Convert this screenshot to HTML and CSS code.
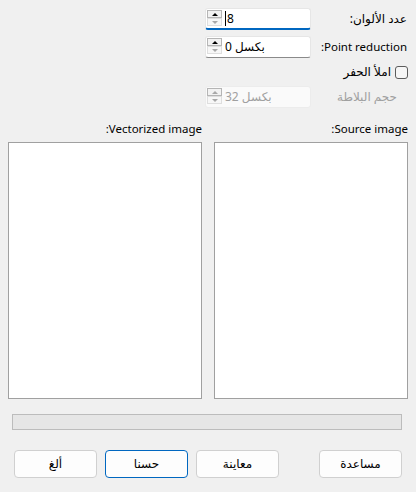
FILE: index.html
```html
<!DOCTYPE html>
<html lang="ar" dir="rtl">
<head>
<meta charset="utf-8">
<link rel="stylesheet" href="styles.css">
</head>
<body>
<div class="dialog">
  <div class="options">
    <div class="row">
      <span class="lbl">عدد الألوان:</span>
      <div class="field focus">
        <div class="spin"><div class="sb up"><i class="tri-up"></i></div><div class="sb down"><i class="tri-down dim"></i></div></div>
        <span class="val"><span class="caret"></span>8</span>
      </div>
    </div>
    <div class="row">
      <span class="lbl en">Point reduction:</span>
      <div class="field">
        <div class="spin"><div class="sb up"><i class="tri-up"></i></div><div class="sb down"><i class="tri-down dim"></i></div></div>
        <span class="val">0 بكسل</span>
      </div>
    </div>
    <div class="row chk-row">
      <span class="chk"></span>
      <span>املأ الحفر</span>
    </div>
    <div class="row">
      <span class="lbl disabled-lbl">حجم البلاطة</span>
      <div class="field disabled">
        <div class="spin"><div class="sb up"><i class="tri-up dim"></i></div><div class="sb down"><i class="tri-down dim"></i></div></div>
        <span class="val">32 بكسل</span>
      </div>
    </div>
  </div>

  <div class="panes">
    <div class="pane">
      <div class="pane-label en">Source image:</div>
      <div class="canvas"></div>
    </div>
    <div class="pane">
      <div class="pane-label en">Vectorized image:</div>
      <div class="canvas"></div>
    </div>
  </div>

  <div class="progress"></div>

  <div class="buttons">
    <button class="btn">مساعدة</button>
    <div class="btn-group">
      <button class="btn">معاينة</button>
      <button class="btn default">حسنا</button>
      <button class="btn">ألغ</button>
    </div>
  </div>
</div>
</body>
</html>
```
FILE: styles.css
```css
html, body {
  margin: 0;
  padding: 0;
}
body {
  background: #f0f0f0;
  font: 12px/16px "Noto Sans", "DejaVu Sans", sans-serif;
  color: #000;
}
.en {
  font-size: 11.5px;
}
.dialog {
  display: flex;
  flex-direction: column;
  height: 492px;
  box-sizing: border-box;
}
.options {
  display: flex;
  flex-direction: column;
  gap: 6px;
  padding: 8px 9px 0 0;
}
.row {
  display: flex;
  align-items: center;
  height: 22px;
}
.lbl {
  width: 96px;
  text-align: right;
  white-space: nowrap;
}
.disabled-lbl {
  color: #a0a0a0;
  padding-right: 10px;
  box-sizing: border-box;
}
.field {
  width: 106px;
  height: 22px;
  box-sizing: border-box;
  background: #fff;
  border: 1px solid #e6e6e6;
  border-bottom-color: #8a8a8a;
  border-radius: 3px;
  display: flex;
  align-items: center;
  direction: ltr;
}
.field.focus {
  border-bottom: 2px solid #0067c0;
}
.field.disabled {
  background: #fafafa;
  border-color: #ececec;
  color: #a0a0a0;
}
.spin {
  display: flex;
  flex-direction: column;
  align-self: flex-start;
  width: 15px;
  margin: 1px 3px 0 1px;
}
.sb {
  height: 8px;
  box-sizing: border-box;
  display: flex;
  align-items: center;
  justify-content: center;
}
.sb.up {
  border: 1px solid #b5b5b5;
  background: #f2f2f2;
}
.sb.down {
  border: 1px solid #dedede;
  background: #f7f7f7;
}
.tri-up, .tri-down {
  display: block;
  width: 0;
  height: 0;
  border-left: 3px solid transparent;
  border-right: 3px solid transparent;
}
.tri-up {
  border-bottom: 3px solid #000;
}
.tri-down {
  border-top: 3px solid #000;
}
.tri-up.dim { border-bottom-color: #a8a8a8; }
.tri-down.dim { border-top-color: #a8a8a8; }
.val {
  display: flex;
  align-items: center;
  white-space: nowrap;
}
.caret {
  display: inline-block;
  width: 1px;
  height: 15px;
  background: #000;
  margin-right: 1px;
}
.chk-row {
  height: 16px;
  gap: 4px;
}
.chk {
  width: 13px;
  height: 13px;
  box-sizing: border-box;
  border: 1px solid #5c5c5c;
  border-radius: 3px;
  background: #f6f6f6;
  margin-right: -1px;
}
.panes {
  display: grid;
  grid-template-columns: 1fr 1fr;
  column-gap: 12px;
  padding: 0 8px;
  margin-top: 13px;
}
.pane-label {
  height: 16px;
  margin-bottom: 5px;
  text-align: right;
}
.canvas {
  height: 257px;
  box-sizing: border-box;
  background: #fff;
  border: 1px solid #a0a0a0;
}
.progress {
  margin: 15px 14px 0 12px;
  height: 16px;
  box-sizing: border-box;
  border: 1px solid #bcbcbc;
  background: #e6e6e6;
}
.buttons {
  display: flex;
  justify-content: space-between;
  margin-top: 20px;
  padding: 0 14px;
}
.btn-group {
  display: flex;
  gap: 8px;
}
.btn {
  width: 83px;
  height: 28px;
  box-sizing: border-box;
  border: 1px solid #d0d0d0;
  border-radius: 4px;
  background: #fdfdfd;
  font: inherit;
  color: #000;
  padding: 0;
}
.btn.default {
  border-color: #0067c0;
}
```
